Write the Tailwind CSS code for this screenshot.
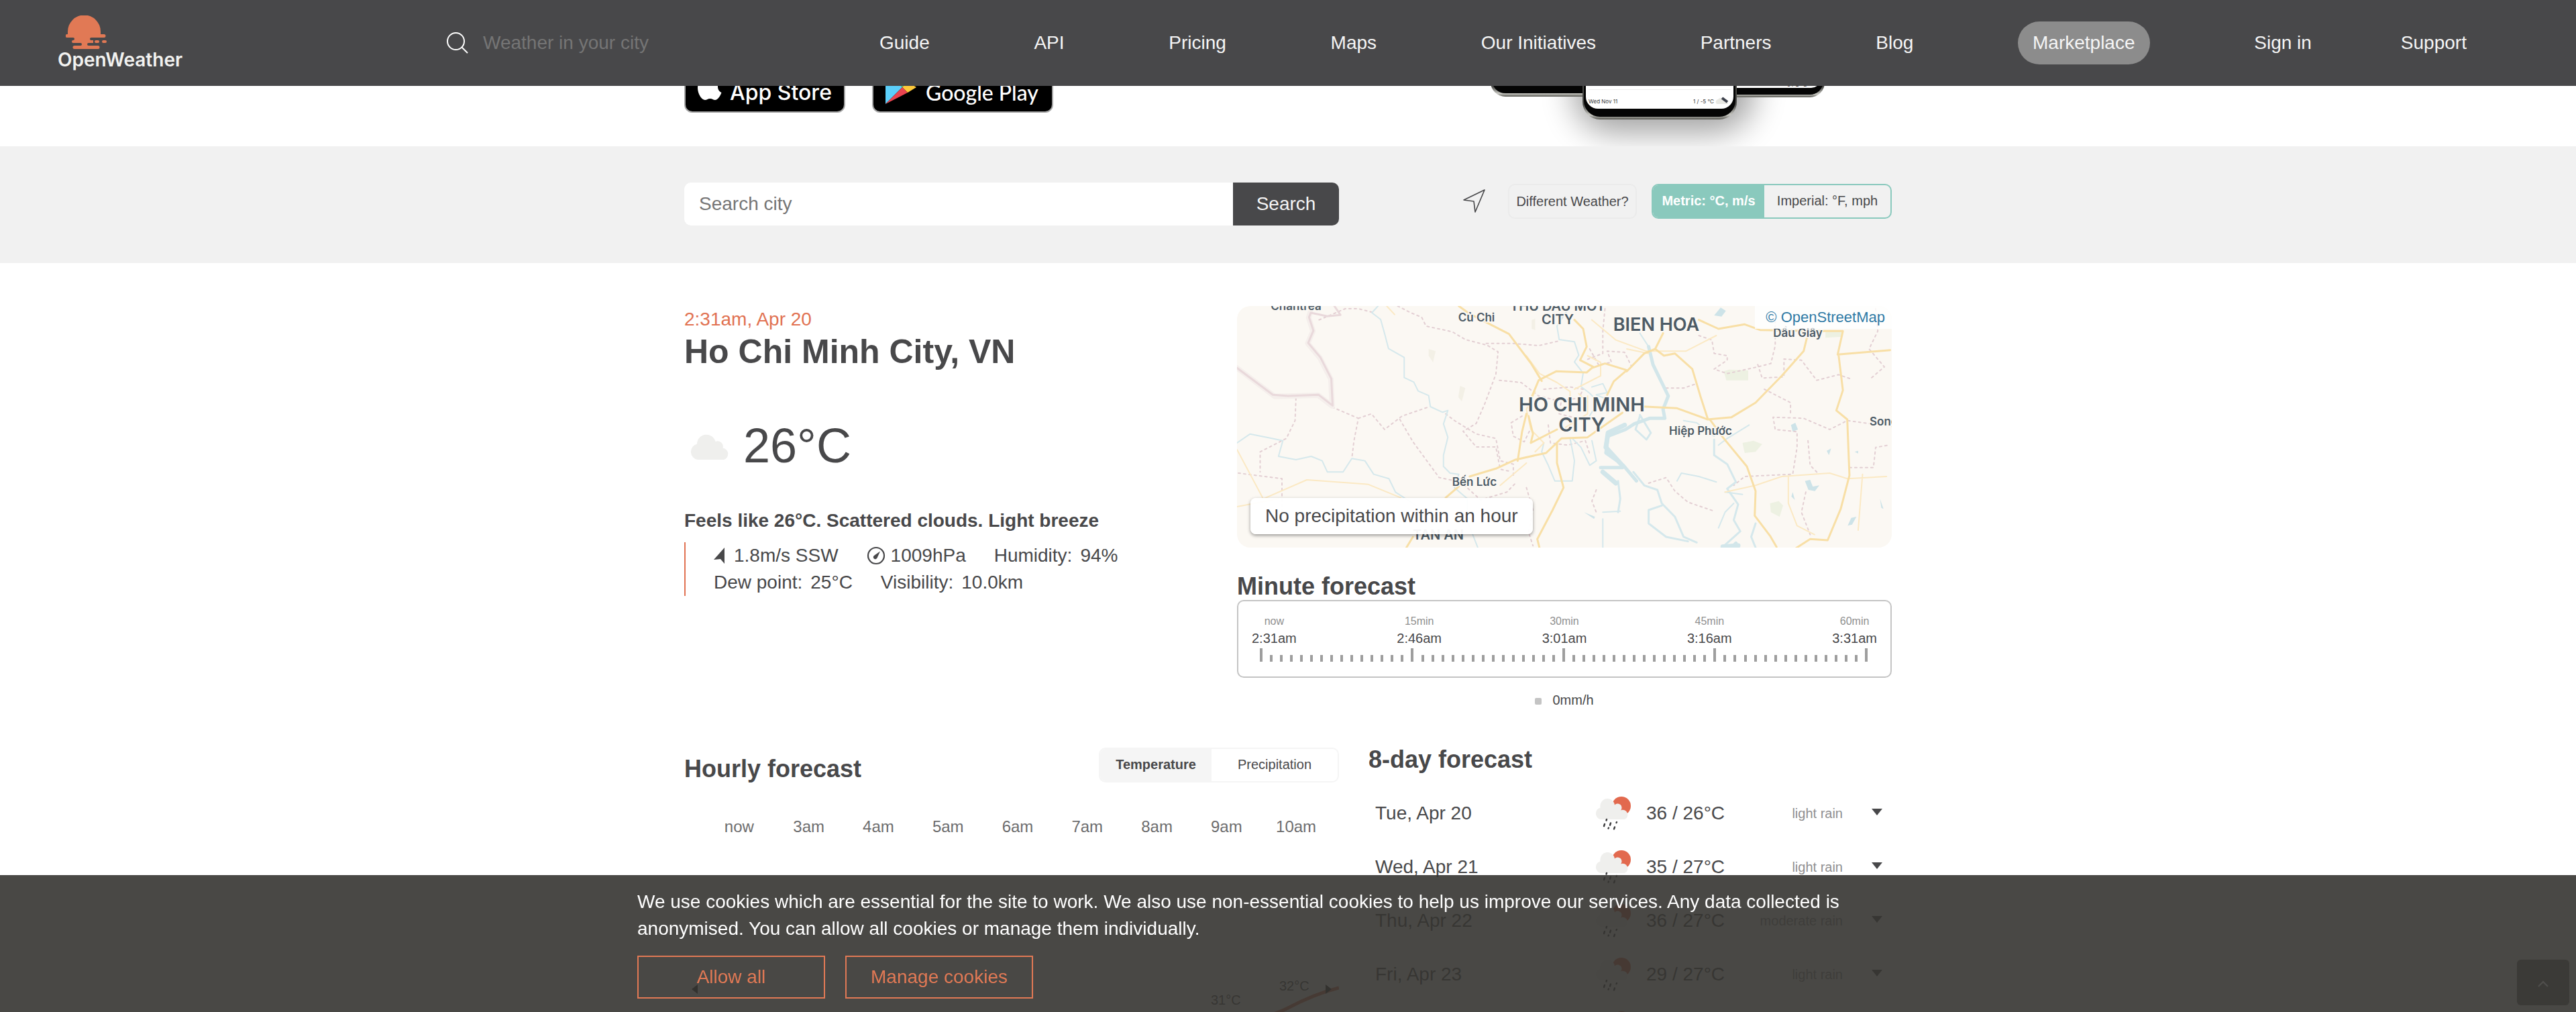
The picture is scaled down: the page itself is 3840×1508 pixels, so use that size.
<!DOCTYPE html>
<html lang="en">
<head>
<meta charset="utf-8">
<title>Ho Chi Minh City, VN - OpenWeather</title>
<script src="https://cdn.jsdelivr.net/npm/@tailwindcss/browser@4"></script>
</head>
<body class="bg-white font-['Liberation_Sans',Arial,sans-serif] text-[28px] leading-10 text-[#48484a]">
<svg class="hidden" aria-hidden="true">
  <symbol id="cloud" viewBox="0 0 60 38"><path fill="#efefed" d="M12 38a12 12 0 0 1-1-23.500 14 14 0 0 1 27.500-3.500 8 8 0 0 1 11 9.500A9 9 0 0 1 51 38z"/></symbol>
  <symbol id="rain" viewBox="0 0 56 50">
    <circle cx="41" cy="14" r="14" fill="#e2694e"/>
    <path fill="#efefed" d="M10 34a9 9 0 0 1-.500-17.500A10.500 11 0 0 1 31 12.500a6 6 0 0 1 9 8A6.800 6.800 0 0 1 46 34z"/>
    <path stroke="#3b3b3d" stroke-width="2.400" stroke-linecap="round" d="M19 34l-.500 1.500M16 41l-1 3M25 39.500l-1 3M34 38l-.500 1M22 46.500l-.500 1M31 45.500l-1 2.800"/>
  </symbol>
</svg>

<header class="fixed inset-x-0 top-0 z-20 flex h-32 items-center bg-[#48484a] pr-[163px] pl-[86px] text-[#f5f5f5]">
  <a href="#" class="flex w-[190px] shrink-0 flex-col" aria-label="OpenWeather home">
    <svg class="ml-3 h-[50px] w-[62px]" viewBox="0 0 62 50" fill="#e17955">
      <path d="M3 29V24a24 24 0 0 1 49 0v5z"/>
      <path d="M2 28h55a2 2 0 0 1 0 5H38a2 2 0 0 0 0 4h3v4h-7a2 2 0 0 0 0 4h14a2.500 2.500 0 0 1 0 5H13a2.500 2.500 0 0 1 0-5h9a2 2 0 0 0 0-4H11a2 2 0 0 1 0-4 2 2 0 0 0 0-4H2a2.500 2.500 0 0 1 0-5z"/>
      <rect x="43" y="37" width="7" height="4" rx="2"/><rect x="54" y="37" width="7" height="4" rx="2"/>
    </svg>
    <span class="font-['Inter',sans-serif] text-[28px] leading-8 font-semibold text-[#f2f2f0]">OpenWeather</span>
  </a>
  <form class="ml-[390px] flex shrink-0 items-center gap-[22px]">
    <svg class="size-8" viewBox="0 0 32 32" fill="none" stroke="#fff" stroke-width="2"><circle cx="13.500" cy="13.500" r="12.500"/><path d="M22.500 22.500L31 31"/></svg>
    <input aria-label="Weather in your city" placeholder="Weather in your city" class="w-[360px] bg-transparent outline-none placeholder:text-[#757575]">
  </form>
  <nav class="ml-[231px] flex flex-1 items-center justify-between whitespace-nowrap">
    <a href="#">Guide</a><a href="#">API</a><a href="#">Pricing</a><a href="#">Maps</a><a href="#">Our Initiatives</a><a href="#">Partners</a><a href="#">Blog</a>
    <a href="#" class="rounded-full bg-[#8c8c8c] px-[22px] py-3">Marketplace</a>
    <div class="flex gap-[133px]"><a href="#">Sign in</a><a href="#">Support</a></div>
  </nav>
</header>

<main class="h-screen overflow-hidden">
  <section class="pt-[88px]">
    <div class="mx-auto flex h-[130px] max-w-[1800px] items-start">
      <a href="#" class="flex h-20 w-60 items-center rounded-xl border-2 border-[#a6a6a6] bg-black px-4 text-white" aria-label="Download on the App Store">
        <svg class="mr-[10px] h-[50px] w-10 shrink-0" viewBox="0 0 40 50" fill="#fff"><path d="M32 26c0-5 4-7.500 4.500-8-2.500-3.500-6.500-4-8-4-3.500-.400-6.500 2-8 2s-4.300-2-7-2C6 14 2 21 2 28c0 8 5.500 18 11 18 3 0 4-2 7.500-2s4.500 2 7.500 2c4.500 0 8-7 9.500-11-3.500-1.500-5.500-5-5.500-9zM27 9c1.500-2 2.500-4.500 2.200-7-2.200.1-5 1.500-6.500 3.300C21.300 7 20 9.500 20.400 12 23 12.200 25.500 10.800 27 9z"/></svg>
        <span class="flex flex-col font-['Inter',sans-serif] whitespace-nowrap"><span class="text-[16px] leading-5">Download on the</span><span class="text-[32px] leading-9 font-medium">App Store</span></span>
      </a>
      <a href="#" class="ml-10 flex h-20 w-[270px] items-center rounded-xl border-2 border-[#a6a6a6] bg-black px-4 text-white" aria-label="Get it on Google Play">
        <svg class="mt-1 mr-3 h-[54px] w-[50px] shrink-0" viewBox="0 0 50 54"><path fill="#5bcffa" d="M2 2v50l25-25z"/><path fill="#4fd37f" d="M2 2l25 25 8-8z"/><path fill="#fdc93b" d="M35 19l13 8-13 8-8-8z"/><path fill="#ea4450" d="M2 52l25-25 8 8z"/></svg>
        <span class="flex flex-col font-['Lato',sans-serif] whitespace-nowrap"><span class="text-[16px] leading-5">GET IT ON</span><span class="text-[32px] leading-9 font-medium">Google Play</span></span>
      </a>
      <svg class="mt-10 mr-20 ml-auto h-[90px] w-[540px]" viewBox="0 0 540 90">
        <defs>
          <filter id="soft" x="-50%" y="-50%" width="200%" height="200%"><feGaussianBlur stdDeviation="24"/></filter>
          <linearGradient id="rim" x1="0" x2="0" y1="0" y2="1"><stop offset=".8" stop-color="#4b4b48"/><stop offset=".94" stop-color="#c9c9c3"/><stop offset="1" stop-color="#55554f"/></linearGradient>
        </defs>
        <rect x="145" y="-60" width="270" height="130" rx="60" fill="#000" opacity=".36" filter="url(#soft)"/>
        <rect x="22" y="-60" width="230" height="76" rx="22" fill="url(#rim)"/><rect x="24" y="-60" width="226" height="71" rx="20" fill="#050505"/>
        <rect x="290" y="-60" width="230" height="77" rx="22" fill="url(#rim)"/><rect x="292" y="-60" width="226" height="73" rx="20" fill="#050505"/><rect x="294" y="-60" width="220" height="63" rx="14" fill="#fff"/>
        <text x="464" y="1" font-size="9" fill="#333">0 / 1 °C</text>
        <rect x="159" y="-60" width="230" height="110" rx="26" fill="url(#rim)"/><rect x="161" y="-60" width="226" height="106" rx="24" fill="#050505"/><rect x="164" y="-60" width="220" height="94" rx="18" fill="#fff"/>
        <path d="M168 5.500h212" stroke="#ececec"/>
        <g font-size="8" font-family="Inter, sans-serif" fill="#333"><text x="168" y="26">Wed Nov 11</text><text x="324" y="26">1 / -5 °C</text></g>
        <path fill="#e8e8e3" d="M359 27a4 4 0 0 1 2-7 5 5 0 0 1 8 0q6 2 7 7z"/><path stroke="#3b3f4a" stroke-width="4" d="M367 18l8 6"/>
      </svg>
    </div>
  </section>

  <section class="bg-[#f1f1f1] pt-[54px] pb-14">
    <div class="mx-auto flex max-w-[1800px] items-start justify-between">
      <form class="flex h-16 w-[976px]">
        <input aria-label="Search city" placeholder="Search city" class="min-w-0 flex-1 rounded-l-[10px] bg-white px-[22px] outline-none placeholder:text-[#757575]">
        <button type="button" class="w-[158px] rounded-r-[10px] bg-[#48484a] text-[#f5f5f5]">Search</button>
      </form>
      <div class="mt-0.5 flex items-center text-[20px]">
        <button type="button" aria-label="Use my location" class="mr-8"><svg class="size-9" viewBox="0 0 36 36" fill="none" stroke="#48484a" stroke-width="1.600" stroke-linejoin="round"><path d="M33 1L2 16l15 2 2 16z"/></svg></button>
        <button type="button" class="mr-[22px] h-[52px] w-48 rounded-[10px] border-2 border-[#ebebeb]">Different Weather?</button>
        <div class="flex h-[52px] w-[358px] overflow-hidden rounded-[10px] border-2 border-[#8ac9bd]">
          <button type="button" class="w-[166px] bg-[#8ac9bd] pb-0.5 font-bold text-white">Metric: °C, m/s</button>
          <button type="button" class="flex-1 pb-0.5">Imperial: °F, mph</button>
        </div>
      </div>
    </div>
  </section>

  <section class="mx-auto flex max-w-[1800px] items-start justify-between pt-16">
    <div>
      <p class="text-[#e17252]">2:31am, Apr 20</p>
      <h1 class="text-[50px] leading-14 font-bold">Ho Chi Minh City, VN</h1>
      <div class="mt-18 flex items-center text-[72px] leading-20"><svg class="mt-1 mr-5 ml-2 h-[38px] w-[60px]"><use href="#cloud"/></svg>26°C</div>
      <p class="mt-13 font-bold">Feels like 26°C. Scattered clouds. Light breeze</p>
      <ul class="mt-3 flex w-[760px] flex-wrap gap-x-[42px] border-l-2 border-[#e17252] pl-[42px]">
        <li class="flex items-center gap-3"><svg class="h-6 w-[18px]" viewBox="0 0 18 24" fill="#48484a"><path d="M16 0v24l-6-7-10 1z"/></svg>1.8m/s SSW</li>
        <li class="flex items-center gap-2"><svg class="size-7" viewBox="0 0 28 28"><circle cx="14" cy="14" r="12" fill="none" stroke="#48484a" stroke-width="2.200"/><path fill="#48484a" d="M20 7.500l-4.500 10a3 3 0 1 1-4-4z"/></svg>1009hPa</li>
        <li class="flex gap-3"><span>Humidity:</span><span>94%</span></li>
        <li class="flex gap-3"><span>Dew point:</span><span>25°C</span></li>
        <li class="flex gap-3"><span>Visibility:</span><span>10.0km</span></li>
      </ul>
    </div>

    <div class="w-[976px]">
      <div class="relative h-[360px] overflow-hidden rounded-[20px] bg-[#fbf8f3]">
        <svg class="h-full w-full" viewBox="0 0 976 360" preserveAspectRatio="xMidYMid slice">
          <g transform="scale(.6507 .3333) translate(-37 -48)" fill="none" stroke-linejoin="round" stroke-linecap="round">
            <g fill="#edf1e2"><path d="M1152 340l12-8 44 4v44h-50zM1195 660l25-10 20 15-15 35-25 5zM1258 930l20-10 10 20-8 50-20-20zM1385 165l40-10v30l-40 5z"/><path d="M476 240l16 10-6 50-10-30zM548 405l12 10-8 60-8-20zM712 110l8-5v50l-8-5z" fill="#f3f0e6"/></g>
            <g fill="#cde3e8"><path d="M1338 830l12-5 6 30 15-5-10 25-15-5zM1388 695l10-10-5 30zM1452 700l8-5v12zM1306 580l10-10 6 30-12 10zM1436 1030l8-35 12-5-10 35zM1310 880l5 35-8-15zM1130 90l15-35 12 15-10 25zM1510 910l8 45-5-5zM832 970l25 20-2 10z"/></g>
            <g stroke="#e3cfd3" stroke-width="2" stroke-dasharray="3 5">
              <path vector-effect="non-scaling-stroke" d="M225 110l60-50 30 0 30 15M405 48l30 30 25 20 10 40 60 25 30 35 50 25 25 30-5 100-25 130-20 90-30 35 30 70 45 0 10 100 25 10M608 215l60 0 60 10 45-20M638 380l50 10 40 60 40 20M172 460l-2 100-20 80-60 60 0 90M40 795l100 25 0 170M255 500l60 50-10 100-5 80M315 550l30-20 30 70 40-60 60-40M410 555l30 100 60 160 50 20 45 80 60-35 20-40M515 530l20 30 50 60 45 20 10 100 30 15 0 60"/>
              <path vector-effect="non-scaling-stroke" d="M880 60l-5 100 0 100-40 30M1095 180l30 20 5 60 30 10 0 20-30 40 30 20 70-30 30-15 10-80 0-110M1230 310l10 60 50-5 0-80 40 5 35 90 50-25 30 20M1500 60l5 100-20 80 35 80-30 50M1490 575l-55-15-40 40-60-50-70-5 5 55 50 10 0 70-10 120-110 10-25 40M1245 420l60 60 0 50M1020 415l40 0 30-20M980 840l40-25 20 60 30 50 60 40M1345 650l5 110 20 40M1440 770l55 0 5-90 30-10M845 240l20 70 30-10-10-50 40 5 15 60M690 540l-25 30 5 60 25 25 15-60M860 870l-10 50 10 50M700 860l15 100-10 100 10 60M1340 880l-10 90 20 100M740 420l60-10 30 10-10 40-40 10-5 60 60 30M750 580l5 80 40 10 40-20 10 60"/>
            </g>
            <g stroke="#f5efec" stroke-width="8"><path vector-effect="non-scaling-stroke" d="M205 75l-4 25 10 60-12 55 28 65 25 95 3 120-32-48-100 5L37 325"/></g>
            <g stroke="#e9d9db" stroke-width="3"><path vector-effect="non-scaling-stroke" d="M260 48l14 40-30 6-38-16-4 20 10 60-12 55 28 65 25 95 3 120-32-48-70 5-35-5L37 325"/></g>
            <g stroke="#d5e8ec" stroke-width="2">
              <path vector-effect="non-scaling-stroke" d="M360 48l-14 30 20 30 10 70 8 60 36 40 0 90 22 20 10 40 24 20 4 50 28 25 12-8-10 60 10 60-10 80 0 50 15 30 20 5-10 60 30 50 0 100 30 150M37 660l30-40 50 20 25 10-10 70 40 15 35-15 25 20 12 50 36 0 20-60 30 10 20 60 35 20 15 60 40 50 20 30M795 48l5 0-30 90 5 60 35 10 10 60-10 30 20 50-5 60 20 30 10 20 0 50-10 30M850 410l25-15 10 40-25 10 25 20M960 170l20 60M740 660l-5 40 15 60 15 70 40 0 5-90-10-100M805 640l20 40 20 80M850 650l10 90-15 20M1060 560l30 10 40 60M1210 580l-50 60-20 30M1045 830l10-35 40 15 40 25M1175 930l-20 40-15 70M875 970l40-5M875 1000l0 128M1195 890l-40-10"/>
              <path stroke-width="3" vector-effect="non-scaling-stroke" d="M1130 645l0 70 30 40 20 80-20 30 25 70-10 70 15 50-40 70M945 790l25 60 30 20 10 60 30 60 20 90 30 25M1010 940l-30 20 0 60 40 60 50 20M910 830l5 80-5 60M960 540l-10 60 25 45 10-30-25-80M1225 1020l-10 60 10 48"/>
            </g>
            <g stroke="#d2e6ea" stroke-width="5"><path vector-effect="non-scaling-stroke" d="M980 230l10 80 15 60 20 80-12 60 4 40-35 0-35 25-20 25-40 30-5 75 40 55 30 70M870 770l30 0 20 0M1170 1128l10-20"/><path vector-effect="non-scaling-stroke" stroke-width="7" d="M925 580l-38 35-5 65 35 75M875 790l30 50M1150 1124l35-5"/></g>
            <g stroke="#fbe9c4" stroke-width="2"><path vector-effect="non-scaling-stroke" d="M380 48l18 38M37 690l60 220 100-85 140 20 75 60M37 945l95-35M850 110l55 90 70 50 90 0 70-70M700 270l30 80 40 40 30 40 0 60M840 270l30 30 0 60-60 60M840 450l0 80-50 60M930 240l50 20M1155 880l70-30 60-40 110-15 40 25 90-10M1300 810l0 120 20 100 40 40M1470 800l-10 250M720 430l-20 80 10 90 30 60-20 40M640 850l60-100M820 440l20 40"/></g>
            <g stroke="#f8dfa6" stroke-width="3"><path vector-effect="non-scaling-stroke" d="M545 48l25 35 90 90 50 130 25 80M810 110l20 40 8 80-15 60 30 30-15 25-70-5-40 40-15 70M850 325l30-20 50 30-30 50-15 60M930 340l40-80 25-20 18-70M995 240l20 30 25-10 40 70 20 130 15 90M1095 110l45 40 60-20 35 25 120 5 70 0-12 105 120-20M1345 170l-10 80-50 110-60 120-55 65-55 10-70-50-80-8M1415 265l10 160-15 90 25 40 5 250-20 150-30 140-40-5-40 50-50 20M1120 555l30 80 55 130 20 110-2 110 35 90 15 50M570 810l60-35 45-40 70-30 35-65 60-5 80-110M515 905l30-50M440 1080l-15 48M700 530l-10 80-10 130M705 540l10 80-5 40 60-60M770 660l0 90 15 110-25 100-35 130 5 40"/></g>
          </g>
          <g font-family="Inter, 'Noto Sans', sans-serif" font-weight="600" fill="#4d5b66" stroke="#fbf8f3" stroke-width="3" paint-order="stroke" text-anchor="middle">
            <g font-size="29"><text x="514" y="157">HO CHI MINH</text><text x="514" y="187">CITY</text></g>
            <g font-size="27"><text x="625" y="37">BIEN HOA</text></g>
            <g font-size="20"><text x="478" y="7">THU DAU MOT</text><text x="478" y="27">CITY</text><text x="300" y="348">TAN AN</text></g>
            <g font-size="17"><text x="88" y="6">Chantrea</text><text x="357" y="23">Củ Chi</text><text x="836" y="46">Dầu Giây</text><text x="691" y="192">Hiệp Phước</text><text x="354" y="268">Bến Lức</text></g>
            <text x="943" y="178" font-size="17" text-anchor="start">Song</text>
          </g>
        </svg>
        <a href="#" class="absolute top-0 right-0 bg-white/80 pr-[10px] pl-4 text-[22px] leading-[34px] text-[#2f7aa5]">© OpenStreetMap</a>
        <div class="absolute bottom-5 left-5 rounded-[8px] bg-white/95 px-[22px] py-[7px] shadow-[0_2px_5px_rgba(0,0,0,0.4)]">No precipitation within an hour</div>
      </div>
      <h2 class="mt-[38px] text-[36px] font-bold">Minute forecast</h2>
      <div class="rounded-[10px] border-2 border-[#c4c4c4] pt-5 pb-[22px]">
        <ol class="flex justify-between px-5 text-center text-[20px] leading-[30px]">
          <li><div class="text-[16px] leading-5 text-[#8f8f8f]">now</div>2:31am</li>
          <li><div class="text-[16px] leading-5 text-[#8f8f8f]">15min</div>2:46am</li>
          <li><div class="text-[16px] leading-5 text-[#8f8f8f]">30min</div>3:01am</li>
          <li><div class="text-[16px] leading-5 text-[#8f8f8f]">45min</div>3:16am</li>
          <li><div class="text-[16px] leading-5 text-[#8f8f8f]">60min</div>3:31am</li>
        </ol>
        <div id="ticks" class="mr-[34px] ml-8 flex h-5 items-end justify-between"></div>
      </div>
      <div class="mt-5 flex items-center justify-center gap-4 text-[20px] leading-[26px]"><span class="mt-1 size-[10px] rounded-xs bg-[#c4c4c4]"></span>0mm/h</div>
    </div>
  </section>

  <section class="mx-auto flex max-w-[1800px] items-start justify-between pt-14">
    <div class="w-[976px]">
      <div class="flex items-start justify-between pt-0.5">
        <h2 class="pt-3 text-[36px] font-bold">Hourly forecast</h2>
        <div class="flex h-[52px] w-[358px] overflow-hidden rounded-[10px] border-2 border-[#f5f5f5] text-[20px]">
          <button type="button" class="w-[166px] bg-[#f5f5f5] pb-0.5 font-bold">Temperature</button>
          <button type="button" class="flex-1 pb-0.5">Precipitation</button>
        </div>
      </div>
      <ol class="mt-[50px] mr-3 ml-[30px] grid grid-cols-9 text-center text-[24px] leading-8 text-[#6d6d6e]">
        <li>now</li><li>3am</li><li>4am</li><li>5am</li><li>6am</li><li>7am</li><li>8am</li><li>9am</li><li>10am</li>
      </ol>
      <svg class="h-[300px] w-full" viewBox="0 0 976 300">
        <path d="M780 275Q860 275 900 254T976 224" fill="none" stroke="#e17252" stroke-width="5"/>
        <g font-size="20" fill="#48484a"><text x="887" y="228">32°C</text><text x="785" y="249">31°C</text></g>
        <path fill="#222" d="M20 219v14l-9-7zM956 219v14l9-7z"/>
      </svg>
    </div>
    <div class="w-[780px]">
      <h2 class="text-[36px] font-bold">8-day forecast</h2>
      <ul id="days" class="mt-5"></ul>
    </div>
  </section>
</main>

<template id="day">
  <li class="flex h-20 items-center pr-[14px] pl-[10px]">
    <span class="flex-1"></span>
    <svg class="mr-[22px] h-[50px] w-14"><use href="#rain"/></svg>
    <span class="w-[140px] whitespace-nowrap"></span>
    <span class="w-[153px] text-right text-[20px] text-[#8f8f90]"></span>
    <button type="button" class="ml-[43px]" aria-label="Show details"><svg class="mb-1 h-[10px] w-4" viewBox="0 0 16 10" fill="#48484a"><path d="M0 0h16L8 10z"/></svg></button>
  </li>
</template>

<aside class="fixed inset-x-0 bottom-0 z-30 bg-[#353431]/90 pt-5 pb-5 text-white">
  <div class="mx-auto max-w-[1940px]">
    <p class="max-w-[1820px]">We use cookies which are essential for the site to work. We also use non-essential cookies to help us improve our services. Any data collected is anonymised. You can allow all cookies or manage them individually.</p>
    <div class="mt-5 flex gap-[30px] text-[#e17955]">
      <button type="button" class="h-16 w-[280px] border-2 border-[#e17955]">Allow all</button>
      <button type="button" class="h-16 w-[280px] border-2 border-[#e17955]">Manage cookies</button>
    </div>
  </div>
</aside>
<button type="button" aria-label="Back to top" class="fixed right-[10px] bottom-[10px] z-40 flex h-[68px] w-[78px] items-center justify-center rounded-md bg-[#3b3a37]"><svg class="mt-1 h-[10px] w-4" viewBox="0 0 16 10" fill="none" stroke="#4f4e4c" stroke-width="2.400"><path d="M1 9l7-7 7 7"/></svg></button>

<script>
  const ticks = document.getElementById('ticks');
  for (let minute = 0; minute <= 60; minute++) {
    const tick = document.createElement('span');
    tick.className = minute % 15 ? 'h-[10px] w-1 bg-[#9e9e9e]' : 'h-5 w-1 bg-[#9e9e9e]';
    ticks.append(tick);
  }
  const days = [
    ['Tue, Apr 20', '36 / 26°C', 'light rain'],
    ['Wed, Apr 21', '35 / 27°C', 'light rain'],
    ['Thu, Apr 22', '36 / 27°C', 'moderate rain'],
    ['Fri, Apr 23', '29 / 27°C', 'light rain'],
    ['Sat, Apr 24', '33 / 26°C', 'light rain'],
  ];
  for (const day of days) {
    const row = document.getElementById('day').content.cloneNode(true);
    row.querySelectorAll('span').forEach((cell, i) => { cell.textContent = day[i]; });
    document.getElementById('days').append(row);
  }
</script>
</body>
</html>
